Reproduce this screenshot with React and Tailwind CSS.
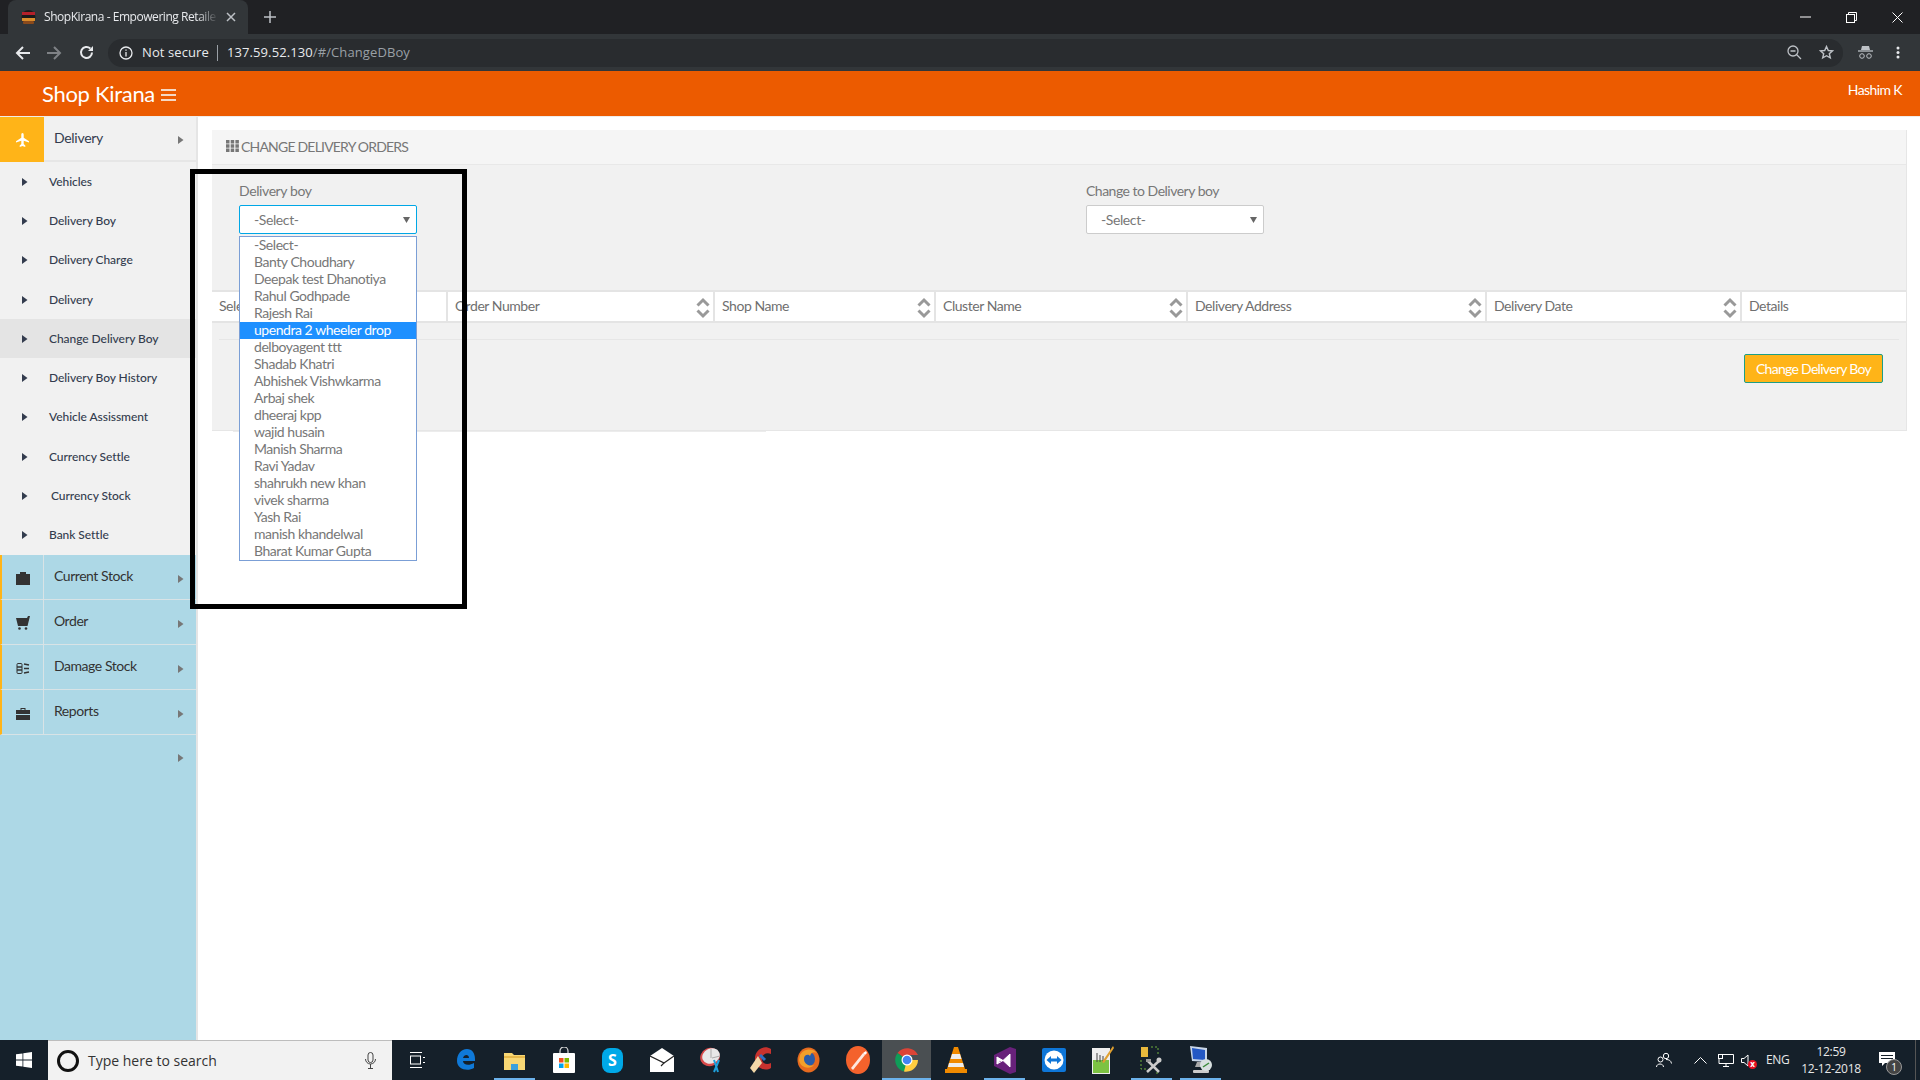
import React from 'react';

const menu = ['Vehicles', 'Delivery Boy', 'Delivery Charge', 'Delivery', 'Change Delivery Boy', 'Delivery Boy History', 'Vehicle Assissment', 'Currency Settle', 'Currency Stock', 'Bank Settle'];
const boys = ['-Select-', 'Banty Choudhary', 'Deepak test Dhanotiya', 'Rahul Godhpade', 'Rajesh Rai', 'upendra 2 wheeler drop', 'delboyagent ttt', 'Shadab Khatri', 'Abhishek Vishwkarma', 'Arbaj shek', 'dheeraj kpp', 'wajid husain', 'Manish Sharma', 'Ravi Yadav', 'shahrukh new khan', 'vivek sharma', 'Yash Rai', 'manish khandelwal', 'Bharat Kumar Gupta'];

function Caret({ className }) {
  return (
    <svg width="6" height="8" viewBox="0 0 6 8" className={className}><path d="M0 0l5.5 4L0 8z" fill="currentColor" /></svg>
  );
}

function Sort() {
  return (
    <svg width="14" height="22" viewBox="0 0 14 22" className="absolute right-[3px] top-[5px] text-[#999]">
      <path d="M1.5 8.5L7 3l5.5 5.5M1.5 13.5L7 19l5.5-5.5" fill="none" stroke="currentColor" strokeWidth="3" />
    </svg>
  );
}

function PlaneIcon() {
  return (
    <svg width="13" height="14" viewBox="0 0 14 15"><path d="M7 0c.9 0 1.3 1 1.3 2.2v3L14 8.8v1.4L8.3 8.4v3.5l1.7 1.4V15L7 14l-3 1v-1.700l1.700-1.400V8.400L0 10.200V8.800l5.700-3.600v-3C5.700 1 6.100 0 7 0z" fill="#fff" /></svg>
  );
}

function StockIcon() {
  return <svg width="14" height="13" viewBox="0 0 14 13"><path d="M4 0h6v2h4v11H0V2h4z" fill="#333" /></svg>;
}

function CartIcon() {
  return (
    <svg width="14" height="14" viewBox="0 0 14 14" fill="#333"><path d="M0 2h11l1-2h2l-2.500 10H2z" /><circle cx="3.500" cy="12.500" r="1.300" /><circle cx="10" cy="12.500" r="1.300" /></svg>
  );
}

function DamageIcon() {
  return (
    <svg width="14" height="13" viewBox="0 0 14 13" fill="none" stroke="#333"><rect x="1" y="1.500" width="5" height="10" rx="1" /><path d="M1 5h5M1 8h5M8 2l5 1M8 6.500h5M8 11l5-1" strokeWidth="1.500" /></svg>
  );
}

function CaseIcon() {
  return (
    <svg width="14" height="13" viewBox="0 0 14 13" fill="#333"><path d="M4.500 3V1h5v2H14v4H0V3zM5.500 3h3V2h-3zM0 8h14v5H0z" fillRule="evenodd" /></svg>
  );
}

function Sidebar() {
  const blue = [
    ['Current Stock', <StockIcon />],
    ['Order', <CartIcon />],
    ['Damage Stock', <DamageIcon />],
    ['Reports', <CaseIcon />],
  ];
  return (
    <aside className="w-[198px] shrink-0 flex flex-col bg-[#add8e6] border-r-2 border-[#e5e5e5]">
      <div className="h-[45px] flex bg-[#f1f1f1] border-b-2 border-[#e6e6e6]">
        <div className="w-[44px] h-[45px] bg-[#ffb418] flex items-center justify-center"><PlaneIcon /></div>
        <div className="flex-1 flex items-center pl-[10px] pb-[3px] text-[14px] tracking-[-0.3px] text-[#333c4e]">Delivery</div>
        <Caret className="text-[#777] mt-[19px] mr-[12px]" />
      </div>
      <div className="flex flex-col bg-[#f1f1f1]">
        {menu.map(m => (
          <div key={m} className={`h-[39.3px] flex items-center text-[12px] tracking-[-0.05px] font-medium text-[#333c4e] ${m === 'Change Delivery Boy' ? 'bg-[#e4e4e4]' : ''}`}>
            <Caret className="ml-[22px] text-[#333c4e]" />
            <span className={m === 'Currency Stock' ? 'ml-[23px]' : 'ml-[21px]'}>{m}</span>
          </div>
        ))}
      </div>
      {blue.map(([label, icon]) => (
        <div key={label} className="h-[45px] flex border-b border-[#d8e3e6] border-l-2 border-l-[#ffb418]">
          <div className="w-[42px] flex items-center justify-center border-r border-[#d8e3e6] pt-[3px]">{icon}</div>
          <div className="flex-1 pl-[10px] pt-[10px] text-[14px] tracking-[-0.45px] text-[#333]">{label}</div>
          <Caret className="text-[#777] mt-[20px] mr-[12px]" />
        </div>
      ))}
      <div className="flex justify-end pt-[19px] pr-[12px]"><Caret className="text-[#777]" /></div>
    </aside>
  );
}

function SelectBox({ active }) {
  return (
    <div className={`w-[178px] h-[29px] bg-white rounded-[2px] flex items-center justify-between pl-[14px] pr-[6px] text-[14px] tracking-[-0.4px] text-[#777] border ${active ? 'border-[#00a7e6]' : 'border-[#ccc]'}`}>
      -Select-
      <svg width="7" height="6" viewBox="0 0 7 6"><path d="M0 0h7L3.500 6z" fill="#666" /></svg>
    </div>
  );
}

function Panel() {
  const cols = [['Sele', false], ['Order Number', true], ['Shop Name', true], ['Cluster Name', true], ['Delivery Address', true], ['Delivery Date', true], ['Details', false]];
  return (
    <main className="flex-1 min-w-0 pt-[13px] pl-[14px] pr-[13px]">
      <section className="relative h-[301px] bg-[#f1f1f1] border-r border-b border-[#e6e6e6]">
        <div className="h-[35px] bg-[#f5f5f5] border-b border-[#e8e8e8] flex items-center pl-[14px] pb-[2px] text-[14px] tracking-[-0.8px] text-[#777]">
          <svg width="13" height="12" viewBox="0 0 13 12" fill="#777" className="mr-[2px]">
            <path d="M0 0h3.500v3.500H0zM4.700 0h3.500v3.500H4.700zM9.400 0h3.500v3.500H9.400zM0 4.300h3.500v3.500H0zM4.700 4.300h3.500v3.500H4.700zM9.400 4.300h3.500v3.500H9.400zM0 8.500h3.500V12H0zM4.700 8.500h3.500V12H4.700zM9.400 8.500h3.500V12H9.400z" />
          </svg>
          CHANGE DELIVERY ORDERS
        </div>
        <div className="h-[125px] flex pl-[27px] pt-[15px]">
          <div className="w-[847px]">
            <div className="text-[14px] text-[#777] tracking-[-0.4px] mb-[4px]">Delivery boy</div>
            <SelectBox active />
          </div>
          <div>
            <div className="text-[14px] text-[#777] tracking-[-0.5px] mb-[4px]">Change to Delivery boy</div>
            <SelectBox />
          </div>
        </div>
        <div className="grid grid-cols-[236px_267px_221px_252px_299px_255px_163px] h-[33px] bg-white border-y-2 border-[#e4e4e4] text-[14px] text-[#6f6f6f] tracking-[-0.45px]">
          {cols.map(([name, sort]) => (
            <div key={name} className="relative flex items-center pl-[7px] pb-[2px] border-r-2 border-[#e4e4e4] last:border-r-0">
              {name}
              {sort && <Sort />}
            </div>
          ))}
        </div>
        <div className="mx-[7px] mt-[16px] border-t border-[#e6e6e6]" />
        <div className="flex justify-end pr-[23px] pt-[14px]">
          <button className="w-[139px] h-[29px] bg-[#ffb418] border border-[#1e9e86] rounded-[2px] text-[14px] text-white tracking-[-0.7px]">Change Delivery Boy</button>
        </div>
        {/* open native select list */}
        <div className="absolute left-[27px] top-[106px] w-[178px] h-[325px] z-10 bg-white border border-[#7b9fd6] text-[14px] tracking-[-0.45px] leading-[15px] text-[#777]">
          {boys.map(b => (
            <div key={b} className={`h-[17px] pl-[14px] ${b.startsWith('upendra') ? 'bg-[#1e90ff] text-white' : ''}`}>{b}</div>
          ))}
        </div>
      </section>
      <div className="ml-[21px] w-[533px] h-px bg-[#ececec]" />
    </main>
  );
}

function Browser() {
  return (
    <div className="font-['Open_Sans',sans-serif]">
      <div className="h-[34px] bg-[#202124] flex pl-[8px] items-end">
        <div className="w-[240px] h-[34px] bg-[#323639] rounded-t-[8px] flex items-center pl-[13px] pr-[10px] text-[12px] text-[#e8eaed]">
          <svg width="15" height="17" viewBox="0 0 15 17" className="shrink-0">
            <circle cx="7.500" cy="8" r="7" fill="#1a1a1a" />
            <rect x="1" y="3" width="13" height="3" fill="#b3202a" />
            <rect x="1" y="9" width="13" height="3" fill="#d98c2b" />
            <rect x="2" y="12" width="11" height="3" rx="1" fill="#8a4a1c" />
          </svg>
          <span className="ml-[8px] w-[174px] whitespace-nowrap tracking-[-0.45px] [mask-image:linear-gradient(90deg,#000_88%,transparent)]">ShopKirana - Empowering Retaile</span>
          <svg width="10" height="10" viewBox="0 0 10 10" className="ml-[8px] shrink-0"><path d="M1 1l8 8M9 1l-8 8" stroke="#bdc1c6" strokeWidth="1.500" /></svg>
        </div>
        <svg width="12" height="12" viewBox="0 0 12 12" className="ml-[16px] mb-[11px]"><path d="M6 0v12M0 6h12" stroke="#bdc1c6" strokeWidth="1.500" /></svg>
        <div className="ml-auto flex h-[34px] items-center text-white">
          <div className="w-[46px] flex justify-center"><svg width="11" height="2"><path d="M0 1h11" stroke="#fff" /></svg></div>
          <div className="w-[46px] flex justify-center">
            <svg width="11" height="11" viewBox="0 0 11 11" fill="none" stroke="#fff"><rect x=".5" y="2.500" width="8" height="8" /><path d="M2.500 2.500v-2h8v8h-2" /></svg>
          </div>
          <div className="w-[46px] flex justify-center"><svg width="11" height="11" viewBox="0 0 11 11"><path d="M.5.5l10 10M10.500.5l-10 10" stroke="#fff" /></svg></div>
        </div>
      </div>
      <div className="h-[37px] bg-[#323639] flex items-center">
        <div className="w-[108px] flex items-center pl-[15px] gap-[17px] shrink-0">
          <svg width="15" height="14" viewBox="0 0 15 14" fill="none" stroke="#e8eaed" strokeWidth="2"><path d="M15 7H2M8 1L2 7l6 6" /></svg>
          <svg width="15" height="14" viewBox="0 0 15 14" fill="none" stroke="#7f8286" strokeWidth="2"><path d="M0 7h13M7 1l6 6-6 6" /></svg>
          <svg width="15" height="15" viewBox="0 0 15 15" fill="none" stroke="#e8eaed" strokeWidth="2"><path d="M13 7.500A5.500 5.500 0 1 1 11.300 3.500" /><path d="M14 1v5H9z" fill="#e8eaed" stroke="none" /></svg>
        </div>
        <div className="w-[1735px] h-[28px] bg-[#292c2f] rounded-full flex items-center pl-[11px] pr-[9px] text-[13px] tracking-[0.1px]">
          <svg width="14" height="14" viewBox="0 0 14 14" fill="none" stroke="#e8eaed" strokeWidth="1.300"><circle cx="7" cy="7" r="6" /><path d="M7 6v4.500M7 3.500v1.300" /></svg>
          <span className="ml-[9px] text-[#e8eaed]">Not secure</span>
          <span className="ml-[8px] mr-[9px] w-px h-[16px] bg-[#9aa0a6]" />
          <span className="text-[#e8eaed]">137.59.52.130</span>
          <span className="text-[#9aa0a6]">/#/ChangeDBoy</span>
          <svg width="15" height="15" viewBox="0 0 15 15" fill="none" stroke="#bdc1c6" strokeWidth="1.300" className="ml-auto mr-[17px]"><circle cx="6" cy="6" r="5" /><path d="M3.500 6h5M9.500 9.500L14 14" /></svg>
          <svg width="15" height="15" viewBox="0 0 15 15" fill="none" stroke="#bdc1c6" strokeWidth="1.400"><path d="M7.500 1.500l1.800 4 4.200.4-3.200 2.800 1 4.200-3.800-2.200-3.800 2.200 1-4.200L1.500 5.900l4.200-.4z" /></svg>
        </div>
        <svg width="15" height="13" viewBox="0 0 15 13" className="ml-[15px]" fill="none" stroke="#bdc1c6"><path d="M4 0h7l1 4H3z" fill="#bdc1c6" stroke="none" /><path d="M0 5h15" strokeWidth="1.300" /><circle cx="4" cy="10" r="2.300" /><circle cx="11" cy="10" r="2.300" /></svg>
        <svg width="4" height="13" viewBox="0 0 4 13" className="ml-[23px]" fill="#e8eaed"><circle cx="2" cy="2" r="1.500" /><circle cx="2" cy="6.500" r="1.500" /><circle cx="2" cy="11" r="1.500" /></svg>
      </div>
    </div>
  );
}

const tb = 'w-[49px] h-[40px] flex items-center justify-center relative';
const bar = 'absolute bottom-0 left-[4px] right-[4px] h-[2px] bg-[#6cb2eb]';

function Taskbar() {
  return (
    <footer className="h-[40px] bg-[#15202a] flex items-center font-['Open_Sans',sans-serif] text-white shrink-0">
      <div className="w-[48px] flex justify-center">
        <svg width="16" height="16" viewBox="0 0 16 16" fill="#fff"><path d="M0 2.300l6.500-.9v6.200H0zM7.300 1.300L16 0v7.600H7.300zM0 8.400h6.500v6.200L0 13.700zM7.300 8.400H16V16l-8.700-1.300z" /></svg>
      </div>
      <div className="w-[344px] h-[40px] bg-[#f2f2f2] border-t border-[#bdbdbd] flex items-center pl-[9px] pr-[16px] text-[14px] text-[#333]">
        <span className="w-[22px] h-[22px] rounded-full border-[3px] border-[#111] shrink-0" />
        <span className="ml-[9px]">Type here to search</span>
        <svg width="11" height="17" viewBox="0 0 11 17" fill="none" stroke="#444" className="ml-auto"><rect x="3" y=".5" width="5" height="10" rx="2.500" /><path d="M.5 7a5 5 0 0 0 10 0M5.500 12v4M3 16.500h5" /></svg>
      </div>
      <div className={tb}>
        <svg width="16" height="16" viewBox="0 0 16 16" fill="none" stroke="#fff"><path d="M1 .5h12M1 15.500h12" /><rect x="1.500" y="4" width="10" height="8" /><path d="M15 5v1M15 10v1" strokeWidth="2" /></svg>
      </div>
      <div className={tb}>
        <svg width="20" height="22" viewBox="0 0 20 22"><path d="M1 12C1 5 5 0 11 0c5 0 8 4 8 10v2H7c0 4 6 5 11 2v5c-7 4-17 1-17-7zm6-3h6c0-4-5-4-6 0z" fill="#0f79d8" /></svg>
      </div>
      <div className={tb}>
        <svg width="21" height="19" viewBox="0 0 21 19"><path d="M0 2h8l2 2h11v15H0z" fill="#f7d774" /><path d="M0 5h21v2H0z" fill="#e6b84a" /><path d="M7 19v-6h7v6z" fill="#3aa0dd" /></svg>
        <span className={bar} />
      </div>
      <div className={tb}>
        <svg width="22" height="26" viewBox="0 0 22 26">
          <path d="M7 7V4a4 4 0 0 1 8 0v3" fill="none" stroke="#ddd" strokeWidth="1.200" />
          <rect y="6" width="22" height="20" rx="1" fill="#fff" />
          <rect x="6" y="11" width="4.500" height="4.500" fill="#f25022" /><rect x="11.500" y="11" width="4.500" height="4.500" fill="#7fba00" />
          <rect x="6" y="16.500" width="4.500" height="4.500" fill="#00a4ef" /><rect x="11.500" y="16.500" width="4.500" height="4.500" fill="#ffb900" />
        </svg>
      </div>
      <div className={tb}>
        <div className="w-[21px] h-[25px] rounded-[8px] bg-[#00a9e8] flex items-center justify-center text-[16px] font-bold text-white">S</div>
      </div>
      <div className={tb}>
        <svg width="24" height="24" viewBox="0 0 24 24"><path d="M0 8L12 0l12 8v16H0z" fill="#fff" /><path d="M0 8l14 7-3 3" fill="none" stroke="#222" strokeWidth="1.200" /><path d="M24 8L14 15" stroke="#222" strokeWidth="1.200" /></svg>
      </div>
      <div className={tb}>
        <svg width="24" height="28" viewBox="0 0 24 28">
          <ellipse cx="11" cy="11" rx="10" ry="9" fill="#d84a4a" transform="rotate(-25 11 11)" /><ellipse cx="12" cy="10" rx="9" ry="7.500" fill="#e8e8e8" transform="rotate(-25 12 10)" />
          <path d="M12 3v9M13 12l8-2" stroke="#aaa" /><path d="M15 14l4 12M20 14l-5 12" stroke="#1ea0dc" strokeWidth="2" />
        </svg>
      </div>
      <div className={tb}>
        <svg width="24" height="28" viewBox="0 0 24 28"><path d="M23 3C15-2 6 5 7 14c1 8 10 12 16 8v-5c-4 2-8 1-9-3-1-5 4-8 9-6z" fill="#c8322e" /><path d="M10 10L2 22l4 5 8-10z" fill="#f2d8a8" /><path d="M12 9l5 5" stroke="#2e6fc4" strokeWidth="3" /></svg>
      </div>
      <div className={tb}>
        <svg width="23" height="26" viewBox="0 0 23 26"><ellipse cx="11.500" cy="13" rx="11" ry="12.500" fill="#e66a1f" /><ellipse cx="12" cy="12" rx="6" ry="7" fill="#2a5ca8" /><path d="M3 8c3-6 12-8 17-2-4-2-6 0-7 3-1-2-6-2-6 3 0 4 4 8 10 6-4 5-14 3-15-5z" fill="#f2a02a" /></svg>
      </div>
      <div className={tb}>
        <svg width="24" height="28" viewBox="0 0 24 28"><ellipse cx="12" cy="14" rx="12" ry="14" fill="#f4622c" /><path d="M5 22L17 7l2 2-12 15z" fill="#fff" opacity=".85" /><path d="M17 7l3-2 1 2-2 2z" fill="#fff" /></svg>
      </div>
      <div className={`${tb} bg-[#4a4f52]`}>
        <svg width="24" height="24" viewBox="0 0 24 24">
          <path d="M12 12L2.500 5A12 12 0 0 1 23 7H12z" fill="#db4437" /><path d="M12 12l-9.500-7A12 12 0 0 0 9 23.600L14 14z" fill="#0f9d58" /><path d="M12 12h11A12 12 0 0 1 9 23.600z" fill="#ffcd40" />
          <circle cx="12" cy="12" r="5.500" fill="#fff" /><circle cx="12" cy="12" r="4.300" fill="#4285f4" />
        </svg>
        <span className="absolute bottom-0 inset-x-0 h-[2px] bg-[#6cb2eb]" />
      </div>
      <div className={tb}>
        <svg width="22" height="26" viewBox="0 0 22 26"><path d="M9 0h4l7 22h2v4H0v-4h2z" fill="#f08a00" /><path d="M7 7h8l1.500 5h-11zM4 16h14l1 4H3z" fill="#eee" /></svg>
      </div>
      <div className={tb}>
        <svg width="22" height="27" viewBox="0 0 22 27"><path d="M16 0l6 2v23l-6 2L0 19v-11z" fill="#68217a" /><path d="M16 7l-7 6.500 7 6.500zM3 10v7l3-3.500zM3 10l6 3.500-3 0zM3 17l6-3.500" fill="#fff" stroke="#fff" /></svg>
        <span className={bar} />
      </div>
      <div className={tb}>
        <div className="w-[24px] h-[24px] rounded-[2px] bg-[#0e76d8] flex items-center justify-center">
          <svg width="20" height="20" viewBox="0 0 20 20"><circle cx="10" cy="10" r="9.500" fill="#fff" /><path d="M2.500 10L7 6v2.500h6V6l4.500 4-4.500 4v-2.500H7V14z" fill="#0e76d8" /></svg>
        </div>
      </div>
      <div className={tb}>
        <svg width="22" height="28" viewBox="0 0 22 28"><path d="M0 2h18v26H0z" fill="#eee" /><path d="M1 14h16v13H1z" fill="#7cc242" /><path d="M5 7v9M8 9v7M11 10v6" stroke="#444" /><path d="M21 0l1 2-10 15-2-1z" fill="#e0a030" /></svg>
      </div>
      <div className={tb}>
        <svg width="24" height="29" viewBox="0 0 24 29">
          <rect x="1" y="1" width="7" height="10" fill="#e8b83c" /><path d="M11 1h7v9M1 14v9h6M16 27h4" fill="none" stroke="#6fae3c" strokeDasharray="2 2" />
          <path d="M7 26l12-11M19 26L8 15" stroke="#ccc" strokeWidth="2.500" /><circle cx="19" cy="14" r="2.500" fill="#ccc" /><rect x="6" y="13" width="5" height="3" fill="#9a9a9a" />
        </svg>
        <span className={bar} />
      </div>
      <div className={tb}>
        <svg width="24" height="29" viewBox="0 0 24 29">
          <path d="M1 0l17 2v14L3 15z" fill="#c9d6e8" /><path d="M3 2l13 2v10L4 13z" fill="#2458c4" />
          <path d="M8 16h8v5H6z" fill="#aaa" /><rect x="4" y="24" width="16" height="3" rx="1" fill="#ccc" /><circle cx="17" cy="19" r="6" fill="#d8e0e0" /><path d="M14 21l6-4" stroke="#3a8a3a" strokeWidth="1.500" />
        </svg>
        <span className={bar} />
      </div>
      <div className="ml-auto h-[40px] flex items-center text-[#e8e8e8]">
        <svg width="16" height="16" viewBox="0 0 16 16" fill="none" stroke="#fff"><circle cx="10" cy="4" r="2.700" /><circle cx="4.500" cy="7.500" r="2.500" /><path d="M.5 15c0-4 7-4 7 0M10 7.500c3 0 5 1 5.500 4" /></svg>
        <svg width="13" height="8" viewBox="0 0 13 8" fill="none" stroke="#fff" className="ml-[22px]"><path d="M.5 7.500l6-6 6 6" /></svg>
        <svg width="16" height="13" viewBox="0 0 16 13" fill="none" stroke="#fff" className="ml-[11px]"><path d="M3 .5h12.500v9H1V5M8 9.500v3M5 12.500h6" /><rect x=".5" y=".5" width="4" height="4" fill="#15202a" /></svg>
        <div className="relative ml-[7px] w-[16px]">
          <svg width="9" height="13" viewBox="0 0 9 13" fill="none" stroke="#fff"><path d="M.5 4.500h2.500L7 1v11L3 8.500H.5z" /></svg>
          <span className="absolute left-[7px] top-[6px] w-[9px] h-[9px] rounded-full bg-[#e81123] text-[8px] leading-[8px] text-center font-bold text-white">x</span>
        </div>
        <span className="ml-[9px] w-[24px] text-[12px] tracking-[-0.4px]">ENG</span>
        <div className="ml-[8px] w-[66px] text-center text-[12px] leading-[17px] tracking-[-0.3px] whitespace-nowrap">
          <div>12:59</div>
          <div>12-12-2018</div>
        </div>
        <div className="relative ml-[13px] mr-[5px] w-[33px] h-[40px]">
          <svg width="16" height="14" viewBox="0 0 16 14" className="absolute left-[2px] top-[12px]"><path d="M0 0h16v11H6l-3 3v-3H0z" fill="#fff" /><path d="M2 3.500h12M2 6.500h12" stroke="#15202a" /></svg>
          <span className="absolute left-[9px] top-[19px] w-[16px] h-[16px] rounded-full bg-[#444] border border-[#999] text-[10px] leading-[14px] text-center text-white">1</span>
        </div>
        <span className="w-px h-[40px] bg-[#555]" />
        <span className="w-[4px]" />
      </div>
    </footer>
  );
}

export default function App() {
  return (
    <div className="relative w-[1920px] h-[1080px] overflow-hidden flex flex-col bg-white font-['Lato',sans-serif]">
      <Browser />
      <header className="h-[46px] shrink-0 bg-[#ec5b00] border-b border-[#f0ece8] flex text-white">
        <div className="pl-[42px] pt-[6px] text-[22px] tracking-[-0.3px] flex items-start">
          Shop Kirana
          <svg width="15" height="12" viewBox="0 0 15 12" className="ml-[6px] mt-[12px]" fill="#f5d8c4"><path d="M0 0h15v2H0zM0 5h15v2H0zM0 10h15v2H0z" /></svg>
        </div>
        <div className="ml-auto pr-[18px] pt-[8px] text-[14px] tracking-[-0.6px]">Hashim K</div>
      </header>
      <div className="flex-1 min-h-0 flex">
        <Sidebar />
        <Panel />
      </div>
      <Taskbar />
      {/* black box drawn on the screenshot */}
      <div className="absolute left-[190px] top-[169px] w-[277px] h-[440px] border-[5px] border-black z-20 pointer-events-none" />
    </div>
  );
}
